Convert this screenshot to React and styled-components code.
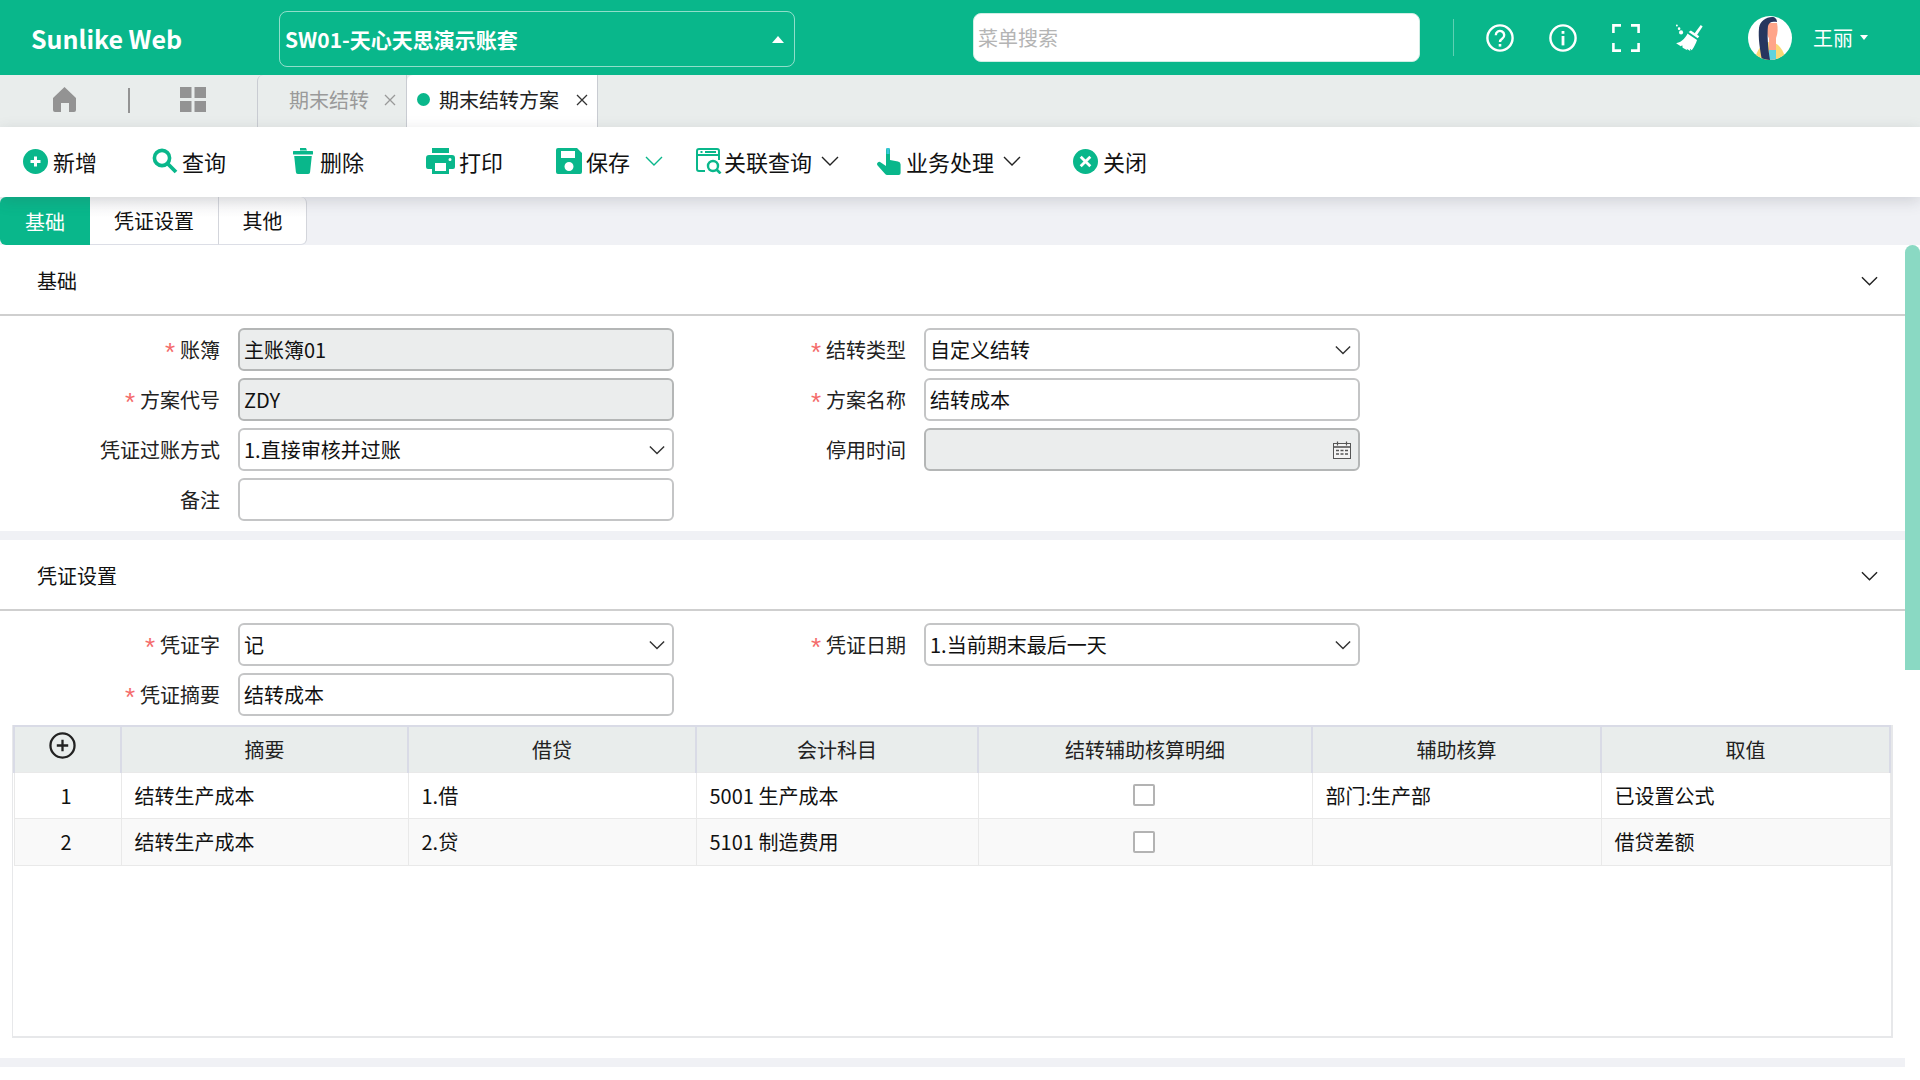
import React from "react";
import styled, { createGlobalStyle } from "styled-components";

const GREEN = "#09b78b";

const GlobalStyle = createGlobalStyle`
  html, body {
    margin: 0;
    padding: 0;
    height: 1080px;
    overflow: hidden;
    background: #ffffff;
  }
  * {
    box-sizing: border-box;
  }
  body, input {
    font-family: "Noto Sans CJK SC", "Noto Sans", sans-serif;
    font-size: 20px;
    color: #111;
  }
`;

const Page = styled.div`
  width: 1920px;
  height: 1080px;
  display: flex;
  flex-direction: column;
  overflow: hidden;
`;

/* top bar */
const Header = styled.header`
  height: 75px;
  flex: none;
  background: ${GREEN};
  display: flex;
  align-items: center;
  color: #fff;
`;

const Logo = styled.div`
  width: 279px;
  padding-left: 31px;
  font-size: 25px;
  font-weight: 700;
  white-space: nowrap;
`;

const CompanySelect = styled.div`
  width: 516px;
  height: 56px;
  margin-top: 3px;
  padding: 0 10px 0 5px;
  border: 1px solid rgba(255, 255, 255, 0.55);
  border-radius: 8px;
  display: flex;
  align-items: center;
  justify-content: space-between;
  font-weight: 700;
  font-size: 21px;
`;

const CaretUp = styled.span`
  width: 0;
  height: 0;
  border-left: 6px solid transparent;
  border-right: 6px solid transparent;
  border-bottom: 7px solid #fff;
`;

const SearchInput = styled.input`
  width: 447px;
  height: 49px;
  margin-left: 178px;
  padding: 0 4px;
  border: 1px solid #cfeee5;
  border-radius: 8px;
  outline: none;
  background: #fff;
  &::placeholder {
    color: #b4b4b4;
    opacity: 1;
  }
`;

const Separator = styled.div`
  width: 1px;
  height: 37px;
  margin-left: 33px;
  background: rgba(255, 255, 255, 0.35);
`;

const HeaderIcons = styled.div`
  display: flex;
  align-items: center;
  gap: 35px;
  margin-left: 32px;
  svg {
    display: block;
  }
`;

const Avatar = styled.svg`
  width: 44px;
  height: 44px;
  margin-left: 45px;
  flex: none;
`;

const UserName = styled.div`
  margin-left: 21px;
  display: flex;
  align-items: center;
  gap: 7px;
  font-size: 20px;
`;

const CaretDown = styled.span`
  width: 0;
  height: 0;
  border-left: 4.5px solid transparent;
  border-right: 4.5px solid transparent;
  border-top: 5px solid #fff;
`;

/* open-page tabs */
const TabStrip = styled.nav`
  height: 52px;
  flex: none;
  background: #e9edec;
  display: flex;
  align-items: center;
  padding-left: 53px;
  > svg {
    margin-bottom: 3px;
  }
`;

const StripDivider = styled.div`
  width: 2px;
  height: 25px;
  margin: 0 50px 2px 52px;
  background: #939393;
`;

const PageTabs = styled.div`
  display: flex;
  height: 52px;
  margin-left: 51px;
`;

const PageTab = styled.div`
  width: ${(p) => p.$width}px;
  display: flex;
  align-items: center;
  padding: 0 0 3px ${(p) => (p.$active ? 10 : 31)}px;
  background: ${(p) => (p.$active ? "#fff" : "transparent")};
  color: ${(p) => (p.$active ? "#222" : "#9a9a9a")};
  border-left: ${(p) => (p.$active ? "none" : "1px solid #c9ccd2")};
  border-right: 1px solid #c9ccd2;
  border-top-left-radius: 6px;
  white-space: nowrap;
`;

const ActiveDot = styled.span`
  width: 13px;
  height: 13px;
  margin-right: 9px;
  border-radius: 50%;
  background: ${GREEN};
  flex: none;
`;

const TabClose = styled.svg`
  width: 12px;
  height: 12px;
  margin-left: ${(p) => p.$offset}px;
  stroke: ${(p) => p.$color};
  stroke-width: 1.3;
  fill: none;
  flex: none;
`;

/* toolbar */
const Toolbar = styled.div`
  height: 70px;
  flex: none;
  background: #fff;
  display: flex;
  align-items: center;
  padding: 0 0 2px 23px;
  position: relative;
  box-shadow: 0 4px 14px rgba(60, 64, 80, 0.18);
`;

const ToolButton = styled.div`
  width: ${(p) => p.$width}px;
  display: flex;
  align-items: center;
  font-size: 22px;
  color: #111;
  white-space: nowrap;
  flex: none;
  svg {
    flex: none;
    display: block;
  }
`;

const ToolLabel = styled.span`
  margin-left: ${(p) => p.$gap || 5}px;
`;

const ToolChevron = styled.svg`
  width: 18px;
  height: 10px;
  margin-left: ${(p) => p.$gap}px;
  fill: none;
  stroke: ${(p) => p.$color || "#222"};
  stroke-width: 1.4;
`;

/* section tabs */
const SectionTabs = styled.div`
  height: 48px;
  flex: none;
  background: #f0f1f5;
  display: flex;
`;

const SectionTab = styled.div`
  width: ${(p) => p.$width}px;
  height: 48px;
  display: flex;
  align-items: center;
  justify-content: center;
  background: ${(p) =>
    p.$active ? GREEN : "linear-gradient(#f7f7f8, #ffffff 45%)"};
  color: ${(p) => (p.$active ? "#fff" : "#111")};
  border-right: ${(p) => (p.$active ? "none" : "1px solid #d3d5db")};
  border-bottom: ${(p) => (p.$active ? "none" : "1px solid #dcdee6")};
  border-radius: ${(p) => p.$radius};
`;

/* scrolling part */
const Body = styled.div`
  flex: 1;
  display: flex;
  min-height: 0;
  background: #fff;
`;

const Content = styled.main`
  flex: 1;
  min-width: 0;
  background: #f0f1f5;
  display: flex;
  flex-direction: column;
  gap: 9px;
`;

const ScrollRail = styled.div`
  width: 15px;
  flex: none;
  background: #fff;
`;

const ScrollThumb = styled.div`
  height: 425px;
  background: #8ad9c3;
  border-radius: 8px 8px 0 0;
`;

const Panel = styled.section`
  background: #fff;
  padding-bottom: ${(p) => p.$pb || 0}px;
  flex: ${(p) => (p.$fill ? 1 : "none")};
`;

const PanelHead = styled.div`
  height: 71px;
  padding: 2px 27px 0 37px;
  border-bottom: 2px solid #cfcfcf;
  display: flex;
  align-items: center;
  justify-content: space-between;
`;

const PanelChevron = styled.svg`
  width: 17px;
  height: 10px;
  fill: none;
  stroke: #222;
  stroke-width: 1.5;
`;

const Form = styled.div`
  padding: 12px 0 ${(p) => p.$pb || 0}px;
  display: flex;
  flex-direction: column;
  gap: 7px;
`;

const FormRow = styled.div`
  display: flex;
  height: 43px;
`;

const Field = styled.div`
  display: grid;
  grid-template-columns: ${(p) => p.$label}px 436px;
  column-gap: 18px;
  align-items: center;
`;

const Label = styled.label`
  text-align: right;
  white-space: nowrap;
  color: #222;
`;

const Required = styled.span`
  font-family: "Liberation Sans", sans-serif;
  color: #f46b6b;
  margin-right: 5px;
  font-size: 26px;
  line-height: 0;
  vertical-align: -3px;
`;

const Control = styled.div`
  height: 43px;
  padding: 0 7px 0 4px;
  border: 2px solid ${(p) => (p.$disabled ? "#b4b6b6" : "#c4c5c6")};
  border-radius: 6px;
  background: ${(p) => (p.$disabled ? "#ebeded" : "#fff")};
  display: flex;
  align-items: center;
  justify-content: space-between;
  white-space: nowrap;
  color: #111;
`;

const SelectArrow = styled.svg`
  width: 16px;
  height: 10px;
  fill: none;
  stroke: #333;
  stroke-width: 1.6;
`;

const Grid = styled.div`
  margin: 9px 12px 0 12px;
  height: 313px;
  border: 2px solid #e7e8ea;
  border-width: 0 2px 2px 1px;
`;

const Table = styled.table`
  width: 1876px;
  table-layout: fixed;
  border-collapse: collapse;
`;

const Th = styled.th`
  height: 46px;
  padding: 0;
  background: #e9edec;
  border: 2px solid #d9dbe6;
  border-bottom: none;
  font-weight: 400;
  color: #222;
`;

const AddIcon = styled.svg`
  width: 27px;
  height: 27px;
  display: block;
  margin: -8px 0 0 34px;
`;

const Tr = styled.tr`
  background: ${(p) => (p.$striped ? "#f9f9f9" : "#fff")};
`;

const Td = styled.td`
  height: 46.5px;
  padding: 0 13px;
  border: 1.5px solid #e9e9e9;
  color: #111;
  white-space: nowrap;
`;

const NoCell = styled(Td)`
  padding: 0 3px 0 0;
  text-align: center;
`;

const CheckCell = styled(Td)`
  padding: 0 2px 0 0;
`;

const CheckBox = styled.span`
  display: block;
  width: 22px;
  height: 22px;
  margin: 0 auto;
  background: #fff;
  border: 2.5px solid #b3b3b3;
  border-radius: 2px;
`;

/* icons */
const PlusCircle = () => (
  <svg width="25" height="25" viewBox="0 0 25 25">
    <circle cx="12.5" cy="12.5" r="12.5" fill={GREEN} />
    <path d="M12.5 7.5v10M7.5 12.5h10" stroke="#fff" strokeWidth="3" />
  </svg>
);

const SearchIcon = () => (
  <svg width="26" height="26" viewBox="0 0 26 26" fill="none" stroke={GREEN}>
    <circle cx="10" cy="10" r="7.6" strokeWidth="3.6" />
    <path d="M15.5 15.5l8.5 8.5" strokeWidth="3.8" />
  </svg>
);

const TrashIcon = () => (
  <svg width="20" height="26" viewBox="0 0 20 26" fill={GREEN}>
    <path d="M7 0h6l1 2.5H7z" />
    <path d="M1 3h18a1 1 0 0 1 0 3.5H1A1 1 0 0 1 1 3z" />
    <path d="M1.2 8h17.6l-1.7 16a2 2 0 0 1-2 2H4.9a2 2 0 0 1-2-2z" />
  </svg>
);

const PrinterIcon = () => (
  <svg width="29" height="26" viewBox="0 0 29 26" fill={GREEN}>
    <path d="M6 0h17v5H6z" />
    <path
      fillRule="evenodd"
      d="M3 7h23a3 3 0 0 1 3 3v9a2 2 0 0 1-2 2h-4v5H6v-5H2a2 2 0 0 1-2-2v-9a3 3 0 0 1 3-3zm6 8v8h11v-8zm15-5a1.5 1.5 0 1 0 0 3 1.5 1.5 0 0 0 0-3z"
    />
  </svg>
);

const SaveIcon = () => (
  <svg width="26" height="26" viewBox="0 0 26 26" fill={GREEN}>
    <path
      fillRule="evenodd"
      d="M2 0h19l5 5v19a2 2 0 0 1-2 2H2a2 2 0 0 1-2-2V2a2 2 0 0 1 2-2zm3 3v7h14V3zm8 11a4.5 4.5 0 1 0 0 9 4.5 4.5 0 0 0 0-9z"
    />
  </svg>
);

const LinkQueryIcon = () => (
  <svg width="26" height="26" viewBox="0 0 26 26" fill="none" stroke={GREEN}>
    <path
      d="M9 23H3a2 2 0 0 1-2-2V3a2 2 0 0 1 2-2h18a2 2 0 0 1 2 2v9"
      strokeWidth="2"
    />
    <path d="M1 7h22" strokeWidth="2" />
    <path d="M4.5 4h2M9 4h11" strokeWidth="2" />
    <circle cx="17" cy="18" r="5" strokeWidth="2.4" />
    <path d="M20.5 21.5l4 4" strokeWidth="2.6" />
  </svg>
);

const HandIcon = () => (
  <svg width="24" height="27" viewBox="0 0 24 27" fill={GREEN}>
    <path d="M9 2a2 2 0 0 1 4 0v10l8 1.6a3 3 0 0 1 2.6 3V25a2 2 0 0 1-2 2H10a2 2 0 0 1-1.6-.8L.6 17.5a2.2 2.2 0 0 1 3.2-3L9 18z" />
    <path d="M9.5 0h3v6h-3z" fill="#35c6d9" />
  </svg>
);

const CloseCircle = () => (
  <svg width="25" height="25" viewBox="0 0 25 25">
    <circle cx="12.5" cy="12.5" r="12.5" fill={GREEN} />
    <path d="M7.7 7.7l9.6 9.6M17.3 7.7l-9.6 9.6" stroke="#fff" strokeWidth="2.8" />
  </svg>
);

const HelpIcon = () => (
  <svg width="28" height="28" viewBox="0 0 28 28" fill="none" stroke="#fff">
    <circle cx="14" cy="14" r="12.6" strokeWidth="2.4" />
    <path
      d="M9.8 11.2a4.2 4.2 0 1 1 6.6 3.4c-1.5 1-2.4 1.8-2.4 3.4"
      strokeWidth="2.4"
    />
    <path d="M14 20v2.6" strokeWidth="2.6" />
  </svg>
);

const InfoIcon = () => (
  <svg width="28" height="28" viewBox="0 0 28 28" fill="none" stroke="#fff">
    <circle cx="14" cy="14" r="12.6" strokeWidth="2.4" />
    <path d="M14 7v2.8" strokeWidth="2.8" />
    <path d="M14 12v9.4" strokeWidth="2.8" />
  </svg>
);

const FullscreenIcon = () => (
  <svg width="28" height="28" viewBox="0 0 28 28" fill="none" stroke="#fff" strokeWidth="2.6">
    <path d="M1.4 9V1.4H9M19 1.4h7.6V9M26.6 19v7.6H19M9 26.6H1.4V19" />
  </svg>
);

const BroomIcon = () => (
  <svg width="28" height="28" viewBox="0 0 30 30" fill="#fff">
    <path d="M27.6 1.2l2 1.4-6.4 9.6-2.6-1.8z" />
    <path d="M14.6 8.6l2.4-1.6 9 6-1.6 2.4z" />
    <path d="M13.6 10.4l10 6.8c-1 3.2-3 7.6-5.6 10.8l-2-1.6.4 2.6-4-2.4.8 1.6-5-2.8-.4-2.6-1.6 1-5-3.2c4.4-.4 9.2-4 12.4-10.6z" />
    <circle cx="4.4" cy="5" r="1.4" />
    <circle cx="2" cy="1.6" r="1" />
    <circle cx="6.5" cy="9" r="2.2" />
  </svg>
);

const HomeIcon = () => (
  <svg width="23" height="25" viewBox="0 0 23 25" fill="#939393">
    <path d="M11.5 0L23 11v12a2 2 0 0 1-2 2h-5v-9H8v9H2a2 2 0 0 1-2-2V11z" />
  </svg>
);

const AppsIcon = () => (
  <svg width="26" height="25" viewBox="0 0 26 25" fill="#939393">
    <path d="M0 0h11.5v11H0zM14.5 0H26v11H14.5zM0 14h11.5v11H0zM14.5 14H26v11H14.5z" />
  </svg>
);

const CalendarIcon = () => (
  <svg width="18" height="18" viewBox="0 0 18 18" fill="none" stroke="#555" strokeWidth="1">
    <rect x="0.5" y="2.5" width="17" height="15" fill="#f4f4f4" />
    <path d="M0.5 6h17" strokeWidth="1.6" />
    <path d="M4.5 0.5v4M13.5 0.5v4" strokeWidth="1.2" />
    <path d="M3 9.5h3M7.5 9.5h3M12 9.5h3M3 13h3M7.5 13h3M12 13h3" strokeWidth="1.6" />
  </svg>
);

const chevronPath = "M1 1l8 8 8-8";

const Chevron = ({ as: Comp = SelectArrow, ...rest }) => (
  <Comp viewBox="0 0 18 10" {...rest}>
    <path d={chevronPath} />
  </Comp>
);

const CloseX = ({ offset, color }) => (
  <TabClose viewBox="0 0 12 12" $offset={offset} $color={color}>
    <path d="M1 1l10 10M11 1L1 11" />
  </TabClose>
);

/* data */
const tools = [
  { label: "新增", width: 129, icon: <PlusCircle /> },
  { label: "查询", width: 141, icon: <SearchIcon />, gap: 4 },
  { label: "删除", width: 133, icon: <TrashIcon />, gap: 7 },
  { label: "打印", width: 130, icon: <PrinterIcon />, gap: 4 },
  { label: "保存", width: 140, icon: <SaveIcon />, gap: 4, chevron: GREEN, chevronGap: 15 },
  { label: "关联查询", width: 181, icon: <LinkQueryIcon />, gap: 2, chevron: "#222", chevronGap: 9 },
  { label: "业务处理", width: 196, icon: <HandIcon />, gap: 5, chevron: "#222", chevronGap: 9 },
  { label: "关闭", width: 100, icon: <CloseCircle /> },
];

const columns = [
  { title: "", width: 107 },
  { title: "摘要", width: 287 },
  { title: "借贷", width: 288 },
  { title: "会计科目", width: 282 },
  { title: "结转辅助核算明细", width: 334 },
  { title: "辅助核算", width: 289 },
  { title: "取值", width: 289 },
];

const rows = [
  { no: 1, summary: "结转生产成本", dc: "1.借", account: "5001 生产成本", aux: "部门:生产部", value: "已设置公式" },
  { no: 2, summary: "结转生产成本", dc: "2.贷", account: "5101 制造费用", aux: "", value: "借贷差额" },
];

const FormField = ({ side, label, required, children }) => (
  <Field $label={side === "left" ? 220 : 232}>
    <Label>
      {required && <Required>*</Required>}
      {label}
    </Label>
    {children}
  </Field>
);

const UserAvatar = () => (
  <Avatar viewBox="0 0 44 44">
    <defs>
      <clipPath id="avatarClip">
        <circle cx="22" cy="22" r="22" />
      </clipPath>
    </defs>
    <g clipPath="url(#avatarClip)">
      <rect width="44" height="44" fill="#fff" />
      <path d="M7 44c1-10 8-18 15-18s13 6 16 18z" fill="#fbd877" />
      <path d="M21 22h7v22h-7z" fill="#ffa58a" />
      <path d="M21 34h7v10h-7z" fill="#5ed3de" />
      <path d="M18 7h11c1 5 1 10-1 15-1 2-2 4-4 4-4-3-7-12-6-19z" fill="#ffa58a" />
      <path d="M11 12c1-7 7-11 13-11 3 0 5 2 5 5-5-1-8 0-9 4-1 8 0 22 2 34h-8c-2-10-4-22-3-32z" fill="#27365f" />
    </g>
  </Avatar>
);

export default function App() {
  return (
    <Page>
      <GlobalStyle />
      <Header>
        <Logo>Sunlike Web</Logo>
        <CompanySelect>
          <span>SW01-天心天思演示账套</span>
          <CaretUp />
        </CompanySelect>
        <SearchInput placeholder="菜单搜索" />
        <Separator />
        <HeaderIcons>
          <HelpIcon />
          <InfoIcon />
          <FullscreenIcon />
          <BroomIcon />
        </HeaderIcons>
        <UserAvatar />
        <UserName>
          王丽
          <CaretDown />
        </UserName>
      </Header>

      <TabStrip>
        <HomeIcon />
        <StripDivider />
        <AppsIcon />
        <PageTabs>
          <PageTab $width={150}>
            期末结转
            <CloseX offset={15} color="#999" />
          </PageTab>
          <PageTab $width={191} $active>
            <ActiveDot />
            期末结转方案
            <CloseX offset={17} color="#333" />
          </PageTab>
        </PageTabs>
      </TabStrip>

      <Toolbar>
        {tools.map((t) => (
          <ToolButton key={t.label} $width={t.width}>
            {t.icon}
            <ToolLabel $gap={t.gap}>{t.label}</ToolLabel>
            {t.chevron && (
              <Chevron as={ToolChevron} $color={t.chevron} $gap={t.chevronGap} />
            )}
          </ToolButton>
        ))}
      </Toolbar>

      <SectionTabs>
        <SectionTab $width={90} $active $radius="6px 0 0 6px">
          基础
        </SectionTab>
        <SectionTab $width={129} $radius="0">
          凭证设置
        </SectionTab>
        <SectionTab $width={88} $radius="0 6px 6px 0">
          其他
        </SectionTab>
      </SectionTabs>

      <Body>
        <Content>
          <Panel>
            <PanelHead>
              基础
              <Chevron as={PanelChevron} />
            </PanelHead>
            <Form $pb={10}>
              <FormRow>
                <FormField side="left" label="账簿" required>
                  <Control $disabled>主账簿01</Control>
                </FormField>
                <FormField side="right" label="结转类型" required>
                  <Control>
                    自定义结转
                    <Chevron />
                  </Control>
                </FormField>
              </FormRow>
              <FormRow>
                <FormField side="left" label="方案代号" required>
                  <Control $disabled>ZDY</Control>
                </FormField>
                <FormField side="right" label="方案名称" required>
                  <Control>结转成本</Control>
                </FormField>
              </FormRow>
              <FormRow>
                <FormField side="left" label="凭证过账方式">
                  <Control>
                    1.直接审核并过账
                    <Chevron />
                  </Control>
                </FormField>
                <FormField side="right" label="停用时间">
                  <Control $disabled>
                    <span />
                    <CalendarIcon />
                  </Control>
                </FormField>
              </FormRow>
              <FormRow>
                <FormField side="left" label="备注">
                  <Control />
                </FormField>
              </FormRow>
            </Form>
          </Panel>

          <Panel $pb={20}>
            <PanelHead>
              凭证设置
              <Chevron as={PanelChevron} />
            </PanelHead>
            <Form>
              <FormRow>
                <FormField side="left" label="凭证字" required>
                  <Control>
                    记
                    <Chevron />
                  </Control>
                </FormField>
                <FormField side="right" label="凭证日期" required>
                  <Control>
                    1.当前期末最后一天
                    <Chevron />
                  </Control>
                </FormField>
              </FormRow>
              <FormRow>
                <FormField side="left" label="凭证摘要" required>
                  <Control>结转成本</Control>
                </FormField>
              </FormRow>
            </Form>
            <Grid>
              <Table>
                <colgroup>
                  {columns.map((c, i) => (
                    <col key={i} width={c.width} />
                  ))}
                </colgroup>
                <thead>
                  <tr>
                    {columns.map((c, i) => (
                      <Th key={i}>
                        {i === 0 ? (
                          <AddIcon viewBox="0 0 26 26" fill="none" stroke="#222">
                            <circle cx="13" cy="13" r="11.6" strokeWidth="2.2" />
                            <path d="M13 7.5v11M7.5 13h11" strokeWidth="2.2" />
                          </AddIcon>
                        ) : (
                          c.title
                        )}
                      </Th>
                    ))}
                  </tr>
                </thead>
                <tbody>
                  {rows.map((r, i) => (
                    <Tr key={r.no} $striped={i % 2 === 1}>
                      <NoCell>{r.no}</NoCell>
                      <Td>{r.summary}</Td>
                      <Td>{r.dc}</Td>
                      <Td>{r.account}</Td>
                      <CheckCell>
                        <CheckBox />
                      </CheckCell>
                      <Td>{r.aux}</Td>
                      <Td>{r.value}</Td>
                    </Tr>
                  ))}
                </tbody>
              </Table>
            </Grid>
          </Panel>

          <Panel $fill />
        </Content>
        <ScrollRail>
          <ScrollThumb />
        </ScrollRail>
      </Body>
    </Page>
  );
}
